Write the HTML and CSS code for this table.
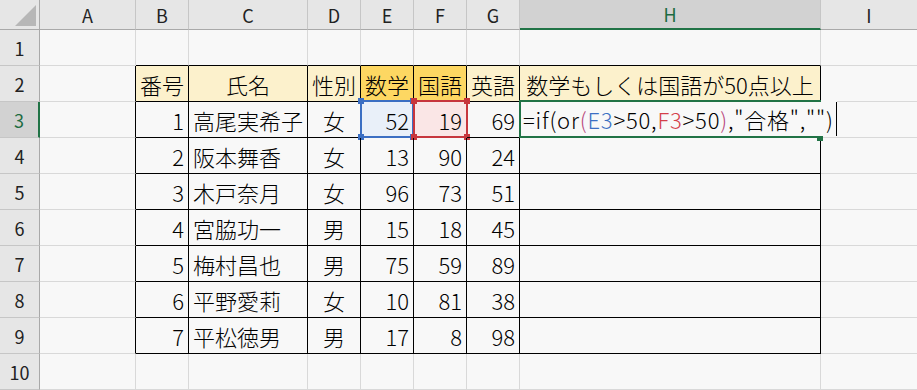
FILE: index.html
```html
<!DOCTYPE html>
<html lang="ja">
<head>
    <meta charset="UTF-8">
    <title>Book1</title>
    <link rel="stylesheet" href="styles.css">
</head>
<body>
    <div class="sheet">
        <!-- column headers -->
        <div class="corner">
            <svg width="39" height="29" viewBox="0 0 39 29"><polygon points="36,5 36,26 15,26" fill="#b7b7b7"/></svg>
        </div>
        <div class="ch">A</div>
        <div class="ch">B</div>
        <div class="ch">C</div>
        <div class="ch">D</div>
        <div class="ch">E</div>
        <div class="ch">F</div>
        <div class="ch">G</div>
        <div class="ch active">H</div>
        <div class="ch">I</div>

        <!-- row 1 -->
        <div class="rh">1</div>
        <div class="c"></div>
        <div class="c top"></div>
        <div class="c top"></div>
        <div class="c top"></div>
        <div class="c top"></div>
        <div class="c top"></div>
        <div class="c top"></div>
        <div class="c top"></div>
        <div class="c"></div>

        <!-- row 2 -->
        <div class="rh">2</div>
        <div class="c left"></div>
        <div class="c t head">番号</div>
        <div class="c t head">氏名</div>
        <div class="c t head">性別</div>
        <div class="c t head gold">数学</div>
        <div class="c t head gold">国語</div>
        <div class="c t head">英語</div>
        <div class="c t head">数学もしくは国語が50点以上</div>
        <div class="c"></div>

        <!-- row 3 -->
        <div class="rh active">3</div>
        <div class="c left"></div>
        <div class="c t num">1</div>
        <div class="c t name">高尾実希子</div>
        <div class="c t mid">女</div>
        <div class="c t num ref-blue">52<span class="ref-box blue"><i class="tl"></i><i class="tr"></i><i class="bl"></i><i class="br"></i></span></div>
        <div class="c t num ref-red">19<span class="ref-box red"><i class="tl"></i><i class="tr"></i><i class="bl"></i><i class="br"></i></span></div>
        <div class="c t num">69</div>
        <div class="c t editing">
            <div class="editor">=if(or<span class="p">(</span><span class="e">E3</span>&gt;50,<span class="f">F3</span>&gt;50<span class="p">)</span>,"合格","")<span class="caret"></span></div>
            <div class="edit-frame"></div>
            <div class="handle"></div>
        </div>
        <div class="c"></div>

        <!-- rows 4 - 9 -->
        <div class="rh">4</div>
        <div class="c left"></div>
        <div class="c t num">2</div>
        <div class="c t name">阪本舞香</div>
        <div class="c t mid">女</div>
        <div class="c t num">13</div>
        <div class="c t num">90</div>
        <div class="c t num">24</div>
        <div class="c t"></div>
        <div class="c"></div>

        <div class="rh">5</div>
        <div class="c left"></div>
        <div class="c t num">3</div>
        <div class="c t name">木戸奈月</div>
        <div class="c t mid">女</div>
        <div class="c t num">96</div>
        <div class="c t num">73</div>
        <div class="c t num">51</div>
        <div class="c t"></div>
        <div class="c"></div>

        <div class="rh">6</div>
        <div class="c left"></div>
        <div class="c t num">4</div>
        <div class="c t name">宮脇功一</div>
        <div class="c t mid">男</div>
        <div class="c t num">15</div>
        <div class="c t num">18</div>
        <div class="c t num">45</div>
        <div class="c t"></div>
        <div class="c"></div>

        <div class="rh">7</div>
        <div class="c left"></div>
        <div class="c t num">5</div>
        <div class="c t name">梅村昌也</div>
        <div class="c t mid">男</div>
        <div class="c t num">75</div>
        <div class="c t num">59</div>
        <div class="c t num">89</div>
        <div class="c t"></div>
        <div class="c"></div>

        <div class="rh">8</div>
        <div class="c left"></div>
        <div class="c t num">6</div>
        <div class="c t name">平野愛莉</div>
        <div class="c t mid">女</div>
        <div class="c t num">10</div>
        <div class="c t num">81</div>
        <div class="c t num">38</div>
        <div class="c t"></div>
        <div class="c"></div>

        <div class="rh">9</div>
        <div class="c left"></div>
        <div class="c t num">7</div>
        <div class="c t name">平松徳男</div>
        <div class="c t mid">男</div>
        <div class="c t num">17</div>
        <div class="c t num">8</div>
        <div class="c t num">98</div>
        <div class="c t"></div>
        <div class="c"></div>

        <!-- row 10 -->
        <div class="rh">10</div>
        <div class="c"></div>
        <div class="c"></div>
        <div class="c"></div>
        <div class="c"></div>
        <div class="c"></div>
        <div class="c"></div>
        <div class="c"></div>
        <div class="c"></div>
        <div class="c"></div>
    </div>
</body>
</html>
```

FILE: styles.css
```css
* {
    margin: 0;
    padding: 0;
    box-sizing: border-box;
}
body {
    background: #f8f8f8;
    font-family: "Noto Sans CJK JP", "Noto Sans", sans-serif;
    font-weight: 300;
    color: #000;
    overflow: hidden;
}
.sheet {
    display: grid;
    grid-template-columns: 40px 96px 53px 119px 53px 53px 53px 53px 301px 97px;
    grid-template-rows: 30px repeat(10, 36px);
    width: 917px;
    height: 390px;
}
.sheet > div {
    display: flex;
    align-items: center;
    line-height: 1;
    white-space: nowrap;
}

/* headers */
.corner {
    background: #e6e6e6;
    border-right: 1px solid #a9a9a9;
    border-bottom: 1px solid #a9a9a9;
}
.ch, .rh {
    background: #e6e6e6;
    color: #222;
    font-size: 18px;
    font-weight: 400;
    justify-content: center;
}
.ch {
    border-right: 1px solid #c6c6c6;
    border-bottom: 1px solid #a9a9a9;
}
.rh {
    border-right: 1px solid #a9a9a9;
    border-bottom: 1px solid #c6c6c6;
}
.ch.active {
    background: #d2d2d2;
    color: #1d6c42;
    border-bottom: 2px solid #217346;
}
.rh.active {
    background: #d2d2d2;
    color: #1d6c42;
    border-right: 2px solid #217346;
}

/* cells */
.c {
    position: relative;
    font-size: 22px;
    border-right: 1px solid #d9d9d9;
    border-bottom: 1px solid #d9d9d9;
}
.c.t {
    border-right-color: #000;
    border-bottom-color: #000;
}
.c.top {
    border-bottom-color: #000;
}
.c.left {
    border-right-color: #000;
}
.head {
    background: #fcf1cc;
    justify-content: center;
}
.head.gold {
    background: #fdd762;
}
.num {
    justify-content: flex-end;
    padding-right: 4px;
}
.name {
    padding-left: 4px;
}
.mid {
    justify-content: center;
}

/* formula references */
.ref-blue {
    background: #e9f0f9;
}
.ref-red {
    background: #fae6e6;
}
.ref-box {
    position: absolute;
    top: -2px;
    left: -1px;
    width: 54px;
    height: 38px;
    border: 2px solid;
}
.ref-box.blue {
    border-color: #3b6fc3;
    color: #3b6fc3;
}
.ref-box.red {
    border-color: #c7363d;
    color: #c7363d;
    width: 55px;
}
.ref-box i {
    position: absolute;
    width: 6px;
    height: 6px;
    background: currentColor;
}
.ref-box .tl { top: -4px; left: -4px; }
.ref-box .tr { top: -4px; right: -4px; }
.ref-box .bl { bottom: -4px; left: -4px; }
.ref-box .br { bottom: -4px; right: -4px; }

/* cell being edited */
.editing {
    z-index: 2;
}
.editor {
    position: absolute;
    top: -1px;
    left: 0;
    height: 36px;
    padding-left: 3px;
    padding-right: 3px;
    background: #f8f8f8;
    display: flex;
    align-items: center;
    font-size: 22px;
    letter-spacing: 0.8px;
}
.editor .p { color: #b8487e; }
.editor .e { color: #3b6fc3; }
.editor .f { color: #d43f4a; }
.caret {
    position: absolute;
    right: 0;
    top: 1px;
    width: 1px;
    height: 34px;
    background: #000;
}
.edit-frame {
    position: absolute;
    top: -2px;
    left: -1px;
    width: 302px;
    height: 38px;
    border: 2px solid #217346;
    border-right: none;
}
.handle {
    position: absolute;
    left: 297px;
    top: 34px;
    width: 6px;
    height: 5px;
    background: #217346;
}
```
